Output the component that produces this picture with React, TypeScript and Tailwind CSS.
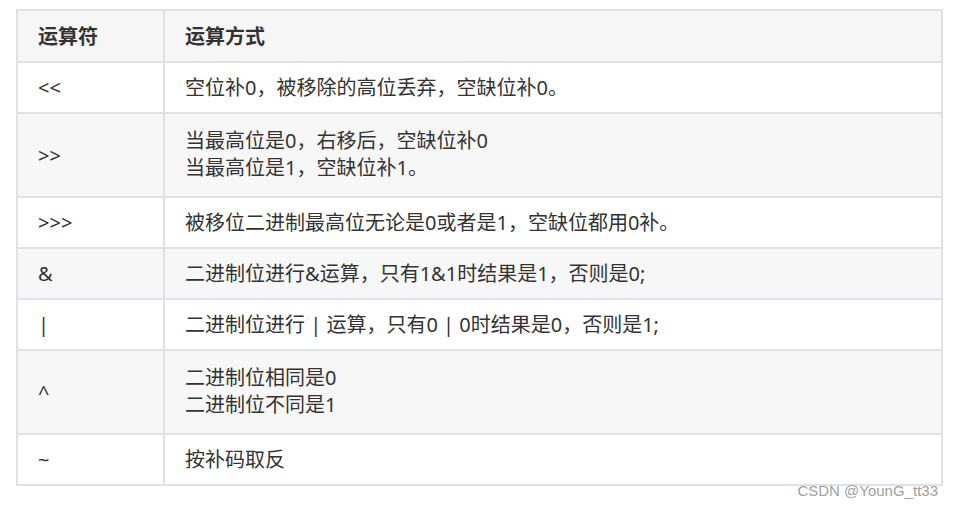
const rows: { op: string; desc: string[]; gray: boolean }[] = [
  { op: "<<", desc: ["空位补0，被移除的高位丢弃，空缺位补0。"], gray: false },
  { op: ">>", desc: ["当最高位是0，右移后，空缺位补0", "当最高位是1，空缺位补1。"], gray: true },
  { op: ">>>", desc: ["被移位二进制最高位无论是0或者是1，空缺位都用0补。"], gray: false },
  { op: "&", desc: ["二进制位进行&运算，只有1&1时结果是1，否则是0;"], gray: true },
  { op: "|", desc: ["二进制位进行 | 运算，只有0 | 0时结果是0，否则是1;"], gray: false },
  { op: "^", desc: ["二进制位相同是0", "二进制位不同是1"], gray: true },
  { op: "~", desc: ["按补码取反"], gray: false },
];

export default function App() {
  return (
    <div
      className="relative w-[953px] h-[506px] bg-white text-[#333] pt-[9px] pl-[16px] [text-spacing-trim:space-all] [font-feature-settings:'chws'_0,'halt'_0]"
      style={{ fontFamily: '"Noto Sans", "Noto Sans CJK SC", sans-serif' }}
    >
      <div className="w-[927px] border-t-2 border-l-2 border-r-2 border-[#dfe2e5] text-[20px] leading-[27px]">
        {/* header */}
        <div className="flex h-[52px] bg-[#f6f6f6] border-b-2 border-[#dfe2e5] font-bold">
          <div className="w-[147px] shrink-0 border-r-2 border-[#dfe2e5] flex items-center pl-[20px]">
            运算符
          </div>
          <div className="flex-1 flex items-center pl-[20px]">运算方式</div>
        </div>

        {rows.map((r) => (
          <div
            key={r.op}
            className={`flex border-b-2 border-[#dfe2e5] ${
              r.desc.length > 1 ? "h-[84px]" : "h-[51px]"
            } ${r.gray ? "bg-[#f7f7f7]" : "bg-white"}`}
          >
            <div className="w-[147px] shrink-0 border-r-2 border-[#dfe2e5] flex items-center pl-[20px]">
              {r.op}
            </div>
            <div
              className={`flex-1 flex flex-col justify-center pl-[20px] ${
                r.desc.length > 1 ? "pb-[3px]" : ""
              }`}
            >
              {r.desc.map((d) => (
                <div key={d}>{d}</div>
              ))}
            </div>
          </div>
        ))}
      </div>

      <div
        className="absolute right-[15px] top-[480px] text-[15px] text-[#a0a0a0]"
        style={{ fontFamily: '"Liberation Sans", Arial, sans-serif' }}
      >
        CSDN @YounG_tt33
      </div>
    </div>
  );
}
